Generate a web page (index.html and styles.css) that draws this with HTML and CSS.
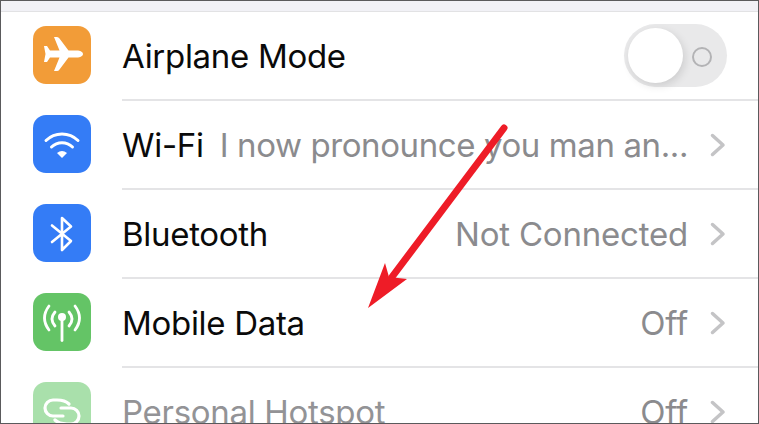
FILE: index.html
```html
<!DOCTYPE html>
<html lang="en">
<head>
<meta charset="utf-8">
<title>Settings</title>
<link rel="stylesheet" href="styles.css">
</head>
<body>
<div class="frame">
  <div class="band"></div>
  <ul class="list">
    <li class="row">
      <span class="icon orange">
        <svg viewBox="0 0 58 58" width="58" height="58"><path fill="#fff" d="M50 28c0-2-3-3.500-6-3.500H35.500L26.500 12.500Q25.500 11 24 11H21L26.500 24.500H17L14 20H11L12.500 28 11 36H14L17 31.500H26.500L21 45H24Q25.500 45 26.500 43.500L35.500 31.500H44C47 31.500 50 30 50 28Z"/></svg>
      </span>
      <div class="body">
        <span class="label">Airplane Mode</span>
        <span class="switch"><span class="knob"></span><span class="off-ring"></span></span>
      </div>
    </li>
    <li class="row">
      <span class="icon blue">
        <svg viewBox="0 0 58 58" width="58" height="58"><g fill="none" stroke="#fff" stroke-width="3" stroke-linecap="round"><path d="M13 25.500a23 23 0 0 1 32 0"/><path d="M18.500 32a15 15 0 0 1 21 0"/></g><path fill="#fff" d="M24 38a8 8 0 0 1 10 0L29 43z"/></svg>
      </span>
      <div class="body">
        <span class="label">Wi-Fi</span>
        <span class="value grow">I now pronounce you man an...</span>
        <svg class="chev" viewBox="0 0 16 24" width="16" height="24"><path d="M2.500 2.500 13 12 2.500 21.500"/></svg>
      </div>
    </li>
    <li class="row">
      <span class="icon blue">
        <svg viewBox="0 0 58 58" width="58" height="58"><path fill="none" stroke="#fff" stroke-width="2.600" stroke-linecap="round" stroke-linejoin="round" d="M19 21.500 38 37 29 46V14L38 22.500 19 38"/></svg>
      </span>
      <div class="body">
        <span class="label">Bluetooth</span>
        <span class="value">Not Connected</span>
        <svg class="chev" viewBox="0 0 16 24" width="16" height="24"><path d="M2.500 2.500 13 12 2.500 21.500"/></svg>
      </div>
    </li>
    <li class="row">
      <span class="icon green">
        <svg viewBox="0 0 58 58" width="58" height="58"><g fill="none" stroke="#fff" stroke-width="2.800" stroke-linecap="round"><path d="M22 19Q16 26 22 33"/><path d="M36 19Q42 26 36 33"/><path d="M16 13Q7 25 16 37"/><path d="M42 13Q51 25 42 37"/><path d="M29 24V47.500"/></g><circle cx="29" cy="24" r="4" fill="#fff"/></svg>
      </span>
      <div class="body">
        <span class="label">Mobile Data</span>
        <span class="value">Off</span>
        <svg class="chev" viewBox="0 0 16 24" width="16" height="24"><path d="M2.500 2.500 13 12 2.500 21.500"/></svg>
      </div>
    </li>
    <li class="row dim">
      <span class="icon light-green">
        <svg viewBox="0 0 58 58" width="58" height="58"><g fill="none" stroke="#fff" stroke-width="3.200" stroke-linecap="round"><path d="M36 22C33 19 29 18 24 18H20A8 8 0 0 0 20 34H30"/><path d="M22 38C25 41 29 42 34 42H38A8 8 0 0 0 38 26H28"/></g></svg>
      </span>
      <div class="body">
        <span class="label">Personal Hotspot</span>
        <span class="value">Off</span>
        <svg class="chev" viewBox="0 0 16 24" width="16" height="24"><path d="M2.500 2.500 13 12 2.500 21.500"/></svg>
      </div>
    </li>
  </ul>
  <svg class="arrow" viewBox="0 0 759 424" width="759" height="424"><path fill="none" stroke="#ee1c27" stroke-width="7" stroke-linecap="round" d="M504 128 392 277"/><path fill="#ee1c27" d="M385 263 368 308 407 279 389 277z"/></svg>
</div>
</body>
</html>
```
FILE: styles.css
```css
html, body {
  margin: 0;
  padding: 0;
  background: #fff;
}

.frame {
  position: relative;
  width: 759px;
  height: 424px;
  box-sizing: border-box;
  border: 1px solid #5a5a5c;
  overflow: hidden;
  font-family: Inter, "Liberation Sans", sans-serif;
  background: #fff;
}

.band {
  height: 10px;
  background: #f1f1f6;
  border-bottom: 1px solid #e2e2e4;
}

.list {
  list-style: none;
  margin: 0;
  padding: 0;
}

.row {
  display: flex;
  height: 89px;
  padding-left: 32px;
  gap: 31px;
  box-sizing: border-box;
}

.icon {
  flex: none;
  width: 58px;
  height: 58px;
  margin-top: 14px;
  border-radius: 13px;
  display: block;
}

.icon svg {
  display: block;
}

.orange { background: #f29c38; }
.blue { background: #347cf6; }
.green { background: #64c466; }
.light-green { background: #a9e0ab; }

.body {
  flex: 1;
  min-width: 0;
  display: flex;
  align-items: center;
  padding: 0 32px 0 0;
  border-bottom: 2px solid #e4e4e6;
  box-sizing: border-box;
  height: 89px;
  justify-content: space-between;
}

.label {
  font-size: 33px;
  letter-spacing: -0.3px;
  color: #0a0a0a;
  white-space: nowrap;
}

.value {
  margin-left: auto;
  font-size: 33px;
  letter-spacing: -0.2px;
  color: #8b8b8e;
  white-space: nowrap;
}

.value.grow {
  letter-spacing: -0.4px;
}

.chev {
  flex: none;
  margin-left: 22px;
  fill: none;
  stroke: #c4c4c6;
  stroke-width: 3.500;
  stroke-linecap: round;
  stroke-linejoin: round;
}

.dim .label {
  color: #939396;
}

.switch {
  position: relative;
  width: 103px;
  height: 63px;
  margin-right: -1px;
  border-radius: 32px;
  background: #e9e9ea;
  flex: none;
}

.knob {
  position: absolute;
  left: 4px;
  top: 4px;
  width: 55px;
  height: 55px;
  border-radius: 50%;
  background: #fff;
  box-shadow: 2px 3px 8px rgba(0, 0, 0, 0.12);
}

.off-ring {
  position: absolute;
  left: 68px;
  top: 23px;
  width: 20px;
  height: 20px;
  box-sizing: border-box;
  border: 2px solid #b3b3b5;
  border-radius: 50%;
}

.arrow {
  position: absolute;
  left: -1px;
  top: -1px;
  pointer-events: none;
}
```
